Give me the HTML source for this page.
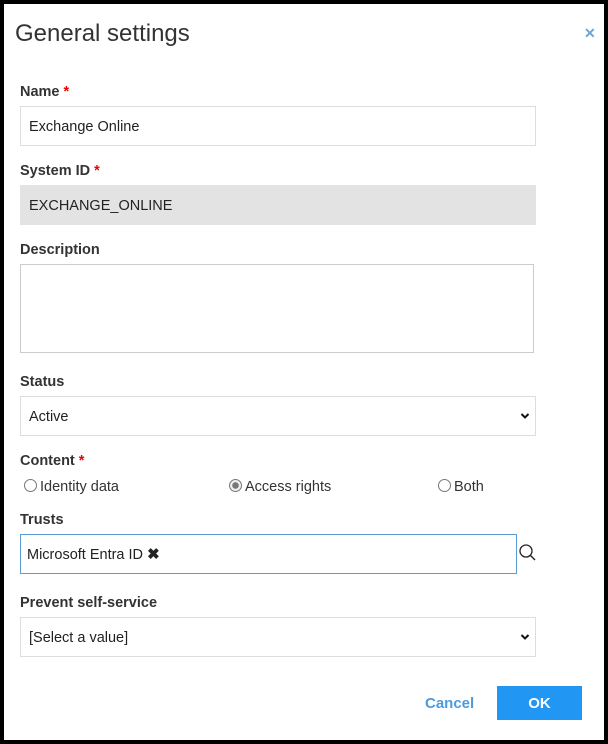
<!DOCTYPE html>
<html><head><style>
body{margin:0;width:608px;height:744px;background:#fff;font-family:"Liberation Sans",sans-serif;color:#222;position:relative;overflow:hidden}
.frame{position:absolute;left:0;top:0;width:600px;height:736px;border:4px solid #000;}
.a{position:absolute}
.lbl{position:absolute;left:20px;font-size:14.5px;font-weight:bold;color:#333}
.lbl b{color:#e00;font-weight:bold}
.box{position:absolute;left:20px;width:514px;height:38px;border:1px solid #ddd;background:#fff;font-size:14.5px;line-height:40px;padding-left:8px;box-sizing:content-box}
.chev{position:absolute;right:5px;top:15px}
.radio{position:absolute;top:479px;font-size:14.5px;color:#333}
.radio i{display:inline-block;width:11px;height:11px;border:1px solid #777;border-radius:50%;vertical-align:-1px;margin-right:3px;position:relative}
</style></head><body>
<div class="frame"></div>
<div class="a" style="left:15px;top:20px;font-size:24px;color:#333">General settings</div>
<div class="a" style="left:584px;top:25px;font-size:14px;font-weight:bold;color:#6aa5d6">✕</div>
<div class="lbl" style="top:84px">Name <b>*</b></div>
<div class="box" style="top:106px;width:506px">Exchange Online</div>
<div class="lbl" style="top:163px">System ID <b>*</b></div>
<div class="box" style="top:185px;width:506px;background:#e3e3e3;border-color:#e3e3e3">EXCHANGE_ONLINE</div>
<div class="lbl" style="top:242px">Description</div>
<div class="box" style="top:264px;width:504px;height:87px;border-color:#ccc"></div>
<div class="lbl" style="top:374px">Status</div>
<div class="box" style="top:396px;width:506px">Active<svg class="chev" width="10" height="8" viewBox="0 0 10 8"><path d="M1.5 2 L5 5.5 L8.5 2" fill="none" stroke="#111" stroke-width="2"/></svg></div>
<div class="lbl" style="top:453px">Content <b>*</b></div>
<div class="radio" style="left:24px"><i></i>Identity data</div>
<div class="radio" style="left:229px"><i style="background:radial-gradient(circle,#777 0 3px,#eee 3.5px)"></i>Access rights</div>
<div class="radio" style="left:438px"><i></i>Both</div>
<div class="lbl" style="top:512px">Trusts</div>
<div class="box" style="top:534px;width:489px;border-color:#5b9bd5;padding-left:6px">Microsoft Entra ID <b style="font-size:15px">✖</b></div>
<svg class="a" style="left:518px;top:543px" width="20" height="20" viewBox="0 0 20 20"><circle cx="8" cy="8" r="6" fill="none" stroke="#222" stroke-width="1.3"/><line x1="12.3" y1="12.3" x2="17" y2="17" stroke="#222" stroke-width="1.4"/></svg>
<div class="lbl" style="top:595px">Prevent self-service</div>
<div class="box" style="top:617px;width:506px">[Select a value]<svg class="chev" width="10" height="8" viewBox="0 0 10 8"><path d="M1.5 2 L5 5.5 L8.5 2" fill="none" stroke="#111" stroke-width="2"/></svg></div>
<div class="a" style="left:425px;top:695px;font-size:15px;font-weight:bold;color:#4a9be0">Cancel</div>
<div class="a" style="left:497px;top:686px;width:85px;height:34px;background:#2196f3;color:#fff;font-weight:bold;font-size:15px;text-align:center;line-height:35px">OK</div>
</body></html>
